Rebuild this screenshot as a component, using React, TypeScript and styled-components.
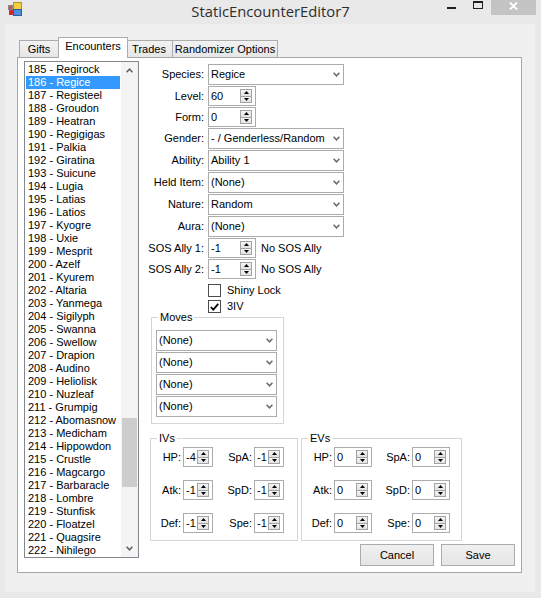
import React from "react";
import styled, { createGlobalStyle } from "styled-components";

const Global = createGlobalStyle`
  html, body { margin: 0; padding: 0; background: #e9e9e9; }
  body { font-family: "Liberation Sans", Arial, sans-serif; font-size: 11px; line-height: 13px; color: #000; }
  * { box-sizing: border-box; }
`;

const Window = styled.div`
  width: 541px;
  height: 598px;
  background: #e9e9e9;
  display: flex;
  flex-direction: column;
  overflow: hidden;
`;

const TitleBar = styled.div`
  height: 24px;
  flex: none;
  display: grid;
  grid-template-columns: 1fr auto 1fr;
  align-items: start;
`;

const IconSlot = styled.div`
  padding: 2px 0 0 8px;
  display: flex;
`;

const TitleText = styled.div`
  font-family: "Open Sans", "Noto Sans", sans-serif;
  font-size: 14.8px;
  line-height: 20px;
  color: #2e2e2e;
  padding-top: 1px;
`;

const Controls = styled.div`
  display: flex;
  justify-content: flex-end;
  padding-right: 5px;
`;

const CtlButton = styled.div<{ $w: number; $close?: boolean }>`
  width: ${(p) => p.$w}px;
  height: 15px;
  display: flex;
  justify-content: center;
  align-items: flex-start;
  background: ${(p) => (p.$close ? "#c4c4c4" : "transparent")};
`;

const MinGlyph = styled.div`
  width: 9px;
  height: 2px;
  background: #222;
  margin-top: 7px;
`;

const MaxGlyph = styled.div`
  width: 10px;
  height: 8px;
  border: 1px solid #222;
  border-top-width: 2px;
  margin-top: 1px;
`;

const Client = styled.div`
  flex: 1;
  margin: 0 6px 6px 5px;
  background: #f0f0f0;
  padding: 13px 0 0 12px;
`;

const TabStrip = styled.div`
  display: flex;
  align-items: flex-end;
  height: 20px;
  padding-left: 2px;
`;

const Tab = styled.div<{ $w: number; $active?: boolean }>`
  position: relative;
  width: ${(p) => p.$w}px;
  height: ${(p) => (p.$active ? 21 : 17)}px;
  margin: ${(p) => (p.$active ? "0 -2px -1px -2px" : "0")};
  z-index: ${(p) => (p.$active ? 2 : 1)};
  border: 1px solid #acacac;
  border-bottom: none;
  background: ${(p) => (p.$active ? "#fff" : "linear-gradient(#f2f2f2, #e6e6e6)")};
  display: flex;
  justify-content: center;
  padding-top: 2px;
  & + & {
    margin-left: ${(p) => (p.$active ? -2 : -1)}px;
  }
  white-space: nowrap;
`;

const Panel = styled.div`
  width: 505px;
  height: 516px;
  border: 1px solid #a6a6a6;
  background: #fff;
  display: flex;
  align-items: flex-start;
  padding-left: 6px;
`;

const ListBox = styled.div`
  margin-top: 3px;
  width: 115px;
  height: 497px;
  border: 1px solid #828790;
  display: flex;
  background: #fff;
`;

const ListItems = styled.div`
  flex: 1;
  padding: 1px;
  overflow: hidden;
`;

const ListItem = styled.div<{ $sel?: boolean }>`
  height: 13px;
  line-height: 13px;
  padding-left: 2px;
  white-space: nowrap;
  background: ${(p) => (p.$sel ? "#3399ff" : "transparent")};
  color: ${(p) => (p.$sel ? "#fff" : "#000")};
`;

const ScrollBar = styled.div`
  width: 17px;
  display: flex;
  flex-direction: column;
  background: #f4f4f4;
`;

const ScrollArrow = styled.div`
  height: 17px;
  display: flex;
  align-items: center;
  justify-content: center;
  flex: none;
`;

const ScrollTrack = styled.div`
  flex: 1;
  display: flex;
  flex-direction: column;
  align-items: center;
`;

const Thumb = styled.div`
  width: 15px;
  background: #cdcdcd;
`;

const Right = styled.div`
  flex: 1;
  display: flex;
  flex-direction: column;
  padding: 6px 6px 0 0;
`;

const FormGrid = styled.div`
  display: grid;
  grid-template-columns: 66px auto;
  column-gap: 3px;
  row-gap: 1px;
  align-items: center;
  justify-items: start;
`;

const Label = styled.div`
  justify-self: end;
  padding-right: 1px;
  white-space: nowrap;
`;

const ComboBox = styled.div<{ $w: number }>`
  width: ${(p) => p.$w}px;
  height: 21px;
  border: 1px solid #acacac;
  background: #fff;
  display: flex;
  align-items: center;
  justify-content: space-between;
  padding: 0 3px 0 2px;
  white-space: nowrap;
`;

const NumBox = styled.div<{ $w: number }>`
  width: ${(p) => p.$w}px;
  height: 20px;
  border: 1px solid #acacac;
  background: #fff;
  display: flex;
  align-items: center;
  padding-left: 2px;
`;

const NumValue = styled.span`
  flex: 1;
`;

const Spinner = styled.div`
  width: 12px;
  align-self: stretch;
  margin: 2px 3px 2px 0;
  display: flex;
  flex-direction: column;
`;

const SpinHalf = styled.div`
  flex: 1;
  border: 1px solid #a3a3a3;
  background: linear-gradient(#f4f4f4, #e2e2e2);
  display: flex;
  align-items: center;
  justify-content: center;
  & + & {
    margin-top: -1px;
  }
`;

const Inline = styled.div`
  display: flex;
  align-items: center;
  gap: 5px;
`;

const CheckRow = styled.div<{ $first?: boolean }>`
  grid-column: 2;
  height: 15px;
  display: flex;
  align-items: center;
  gap: 6px;
  margin-top: ${(p) => (p.$first ? 3 : 0)}px;
`;

const CheckBox = styled.div`
  width: 13px;
  height: 13px;
  border: 1px solid #4d4d4d;
  background: #fff;
  display: flex;
  align-items: center;
  justify-content: center;
`;

const Group = styled.div<{ $w: number; $h: number }>`
  position: relative;
  width: ${(p) => p.$w}px;
  height: ${(p) => p.$h}px;
  border: 1px solid #d5d5d5;
  flex: none;
`;

const Legend = styled.span`
  position: absolute;
  top: -7px;
  left: 6px;
  padding: 0 2px;
  background: #fff;
  line-height: 13px;
`;

const MovesGroup = styled(Group)`
  margin: 3px 0 0 12px;
  padding: 12px 0 0 4px;
  display: flex;
  flex-direction: column;
  gap: 1px;
`;

const StatsRow = styled.div`
  display: flex;
  gap: 3px;
  margin: 14px 0 0 11px;
`;

const StatsGrid = styled.div<{ $cols: string }>`
  display: grid;
  grid-template-columns: ${(p) => p.$cols};
  row-gap: 13px;
  align-items: center;
  padding-top: 8px;
`;

const StatLabel = styled.div`
  justify-self: end;
  padding-right: 2px;
`;

const ButtonRow = styled.div`
  display: flex;
  justify-content: flex-end;
  gap: 7px;
  margin-top: 3px;
`;

const Button = styled.div`
  width: 74px;
  height: 22px;
  border: 1px solid #acacac;
  background: linear-gradient(#f0f0f0, #e5e5e5);
  display: flex;
  align-items: center;
  justify-content: center;
`;

const Chevron = ({ color = "#6a6a6a" }: { color?: string }) => (
  <svg width="7" height="5" viewBox="0 0 7 5">
    <path d="M0.6 0.8 L3.5 3.8 L6.4 0.8" fill="none" stroke={color} strokeWidth="1.5" />
  </svg>
);

const ChevronUp = () => (
  <svg width="7" height="5" viewBox="0 0 7 5">
    <path d="M0.6 4.2 L3.5 1.2 L6.4 4.2" fill="none" stroke="#606060" strokeWidth="1.5" />
  </svg>
);

const Tri = ({ up }: { up?: boolean }) => (
  <svg width="5" height="3" viewBox="0 0 5 3">
    <path d={up ? "M0 3 L2.5 0 L5 3 Z" : "M0 0 L5 0 L2.5 3 Z"} fill="#000" />
  </svg>
);

const Combo = ({ value, w }: { value: string; w: number }) => (
  <ComboBox $w={w}>
    <span>{value}</span>
    <Chevron />
  </ComboBox>
);

const Num = ({ value, w }: { value: string; w: number }) => (
  <NumBox $w={w}>
    <NumValue>{value}</NumValue>
    <Spinner>
      <SpinHalf>
        <Tri up />
      </SpinHalf>
      <SpinHalf>
        <Tri />
      </SpinHalf>
    </Spinner>
  </NumBox>
);

const AppIcon = () => (
  <svg width="15" height="15" viewBox="0 0 15 15">
    <rect x="5.5" y="0.5" width="8" height="7" fill="#f6cf3e" stroke="#b8901c" />
    <rect x="5.5" y="7.5" width="8" height="6" fill="#4f8fe0" stroke="#2c5ca8" />
    <rect x="0.5" y="3.5" width="4" height="4" fill="#d8d8d8" stroke="#888" />
    <rect x="1" y="8" width="4" height="5" fill="#d42a2a" />
    <rect x="1" y="4" width="3" height="3" fill="#e04a4a" />
  </svg>
);

const species = [
  "Regirock", "Regice", "Registeel", "Groudon", "Heatran", "Regigigas", "Palkia", "Giratina",
  "Suicune", "Lugia", "Latias", "Latios", "Kyogre", "Uxie", "Mesprit", "Azelf", "Kyurem",
  "Altaria", "Yanmega", "Sigilyph", "Swanna", "Swellow", "Drapion", "Audino", "Heliolisk",
  "Nuzleaf", "Grumpig", "Abomasnow", "Medicham", "Hippowdon", "Crustle", "Magcargo",
  "Barbaracle", "Lombre", "Stunfisk", "Floatzel", "Quagsire", "Nihilego",
];

const ivs: [string, string, string, string][] = [
  ["HP:", "-4", "SpA:", "-1"],
  ["Atk:", "-1", "SpD:", "-1"],
  ["Def:", "-1", "Spe:", "-1"],
];
const evs: [string, string, string, string][] = [
  ["HP:", "0", "SpA:", "0"],
  ["Atk:", "0", "SpD:", "0"],
  ["Def:", "0", "Spe:", "0"],
];

export default function App() {
  return (
    <>
      <Global />
      <Window>
        <TitleBar>
          <IconSlot>
            <AppIcon />
          </IconSlot>
          <TitleText>StaticEncounterEditor7</TitleText>
          <Controls>
            <CtlButton $w={26}>
              <MinGlyph />
            </CtlButton>
            <CtlButton $w={27}>
              <MaxGlyph />
            </CtlButton>
            <CtlButton $w={45} $close>
              <svg width="9" height="8" viewBox="0 0 9 8" style={{ marginTop: 2 }}>
                <path d="M1 0.5 L8 7.5 M8 0.5 L1 7.5" stroke="#fff" strokeWidth="1.8" />
              </svg>
            </CtlButton>
          </Controls>
        </TitleBar>
        <Client>
          <TabStrip>
            <Tab $w={40}>Gifts</Tab>
            <Tab $w={70} $active>Encounters</Tab>
            <Tab $w={48}>Trades</Tab>
            <Tab $w={106}>Randomizer Options</Tab>
          </TabStrip>
          <Panel>
            <ListBox>
              <ListItems>
                {species.map((s, i) => (
                  <ListItem key={s} $sel={i === 1}>
                    {185 + i} - {s}
                  </ListItem>
                ))}
              </ListItems>
              <ScrollBar>
                <ScrollArrow>
                  <ChevronUp />
                </ScrollArrow>
                <ScrollTrack>
                  <Thumb style={{ marginTop: 339, height: 69 }} />
                </ScrollTrack>
                <ScrollArrow>
                  <Chevron color="#606060" />
                </ScrollArrow>
              </ScrollBar>
            </ListBox>
            <Right>
              <FormGrid>
                <Label>Species:</Label>
                <Combo value="Regice" w={136} />
                <Label>Level:</Label>
                <Num value="60" w={48} />
                <Label>Form:</Label>
                <Num value="0" w={48} />
                <Label>Gender:</Label>
                <Combo value="- / Genderless/Random" w={136} />
                <Label>Ability:</Label>
                <Combo value="Ability 1" w={136} />
                <Label>Held Item:</Label>
                <Combo value="(None)" w={136} />
                <Label>Nature:</Label>
                <Combo value="Random" w={136} />
                <Label>Aura:</Label>
                <Combo value="(None)" w={136} />
                <Label>SOS Ally 1:</Label>
                <Inline>
                  <Num value="-1" w={48} />
                  <span>No SOS Ally</span>
                </Inline>
                <Label>SOS Ally 2:</Label>
                <Inline>
                  <Num value="-1" w={48} />
                  <span>No SOS Ally</span>
                </Inline>
                <CheckRow $first>
                  <CheckBox />
                  <span>Shiny Lock</span>
                </CheckRow>
                <CheckRow>
                  <CheckBox>
                    <svg width="9" height="8" viewBox="0 0 9 8">
                      <path d="M0.8 4 L3.3 6.6 L8.2 0.8" fill="none" stroke="#000" strokeWidth="1.8" />
                    </svg>
                  </CheckBox>
                  <span>3IV</span>
                </CheckRow>
              </FormGrid>
              <MovesGroup $w={133} $h={107}>
                <Legend>Moves</Legend>
                {[0, 1, 2, 3].map((i) => (
                  <Combo key={i} value="(None)" w={121} />
                ))}
              </MovesGroup>
              <StatsRow>
                <Group $w={148} $h={103}>
                  <Legend>IVs</Legend>
                  <StatsGrid $cols="32px 30px 41px 30px">
                    {ivs.map((r) => (
                      <React.Fragment key={r[0]}>
                        <StatLabel>{r[0]}</StatLabel>
                        <Num value={r[1]} w={30} />
                        <StatLabel>{r[2]}</StatLabel>
                        <Num value={r[3]} w={30} />
                      </React.Fragment>
                    ))}
                  </StatsGrid>
                </Group>
                <Group $w={161} $h={103}>
                  <Legend>EVs</Legend>
                  <StatsGrid $cols="32px 38px 40px 38px">
                    {evs.map((r) => (
                      <React.Fragment key={r[0]}>
                        <StatLabel>{r[0]}</StatLabel>
                        <Num value={r[1]} w={38} />
                        <StatLabel>{r[2]}</StatLabel>
                        <Num value={r[3]} w={38} />
                      </React.Fragment>
                    ))}
                  </StatsGrid>
                </Group>
              </StatsRow>
              <ButtonRow>
                <Button>Cancel</Button>
                <Button>Save</Button>
              </ButtonRow>
            </Right>
          </Panel>
        </Client>
      </Window>
    </>
  );
}
